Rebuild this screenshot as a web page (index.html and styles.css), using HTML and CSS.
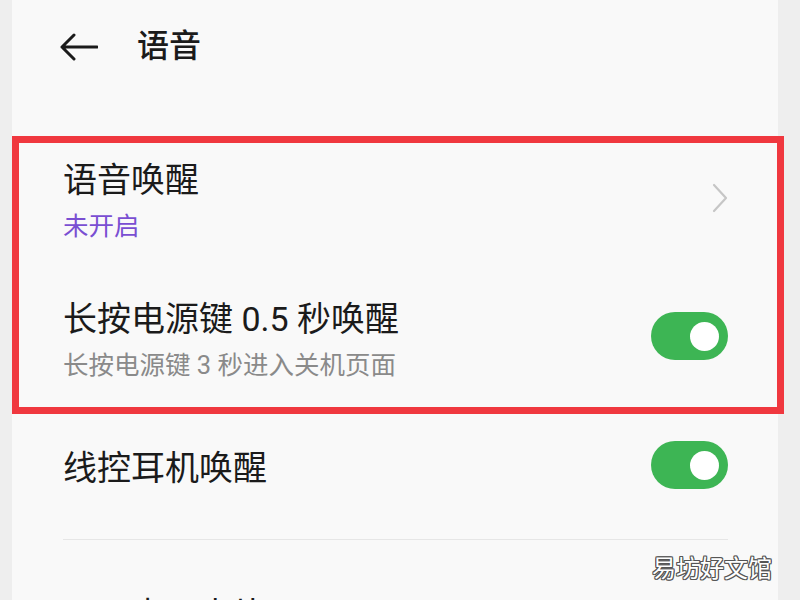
FILE: index.html
```html
<!DOCTYPE html>
<html lang="zh-CN">
<head>
  <meta charset="UTF-8" />
  <meta name="viewport" content="width=device-width, initial-scale=1.0"/>
  <title>语音</title>
  <link rel="stylesheet" href="styles.css">
</head>
<body>

  <div id="page">
    <!-- Header -->
    <div id="header">
      <button class="back" aria-label="返回">
        <svg width="38" height="30" viewBox="0 0 38 30">
          <path d="M14 3 L2 15 L14 27 M2 15 H37" fill="none" stroke="#1b1b1b" stroke-width="3" stroke-linecap="round" stroke-linejoin="round"/>
        </svg>
      </button>
      <h1>语音</h1>
    </div>

    <!-- Highlighted group -->
    <div class="highlight">
      <div class="row">
        <div class="text">
          <div class="label">语音唤醒</div>
          <div class="sub purple">未开启</div>
        </div>
        <svg class="chevron" width="16" height="30" viewBox="0 0 16 30">
          <path d="M2 2 L14 15 L2 28" fill="none" stroke="#c6c6c6" stroke-width="2.2" stroke-linecap="round" stroke-linejoin="round"/>
        </svg>
      </div>
      <div class="row">
        <div class="text">
          <div class="label">长按电源键 0.5 秒唤醒</div>
          <div class="sub">长按电源键 3 秒进入关机页面</div>
        </div>
        <div class="toggle on"><span class="knob"></span></div>
      </div>
    </div>

    <!-- Other settings -->
    <div class="item">
      <div class="label">线控耳机唤醒</div>
      <div class="toggle on"><span class="knob"></span></div>
    </div>
    <div class="item last">
      <div class="label">显示桌面卡片</div>
    </div>
  </div>

  <div class="watermark">易坊好文馆</div>

</body>
</html>
```

FILE: styles.css
```css
/* -- Reset & Base -- */
* { box-sizing: border-box; margin: 0; padding: 0; }
body {
  font-family: Roboto, "Noto Sans CJK SC", sans-serif;
  background: #eeeeee;
  color: #1b1b1b;
  height: 600px;
  overflow: hidden;
}
button { cursor: pointer; background: none; border: none; }

/* -- Page panel -- */
#page {
  margin-left: 12px;
  width: 766px;
  min-height: 600px;
  background: #f9f9f9;
}

/* -- Header -- */
#header {
  height: 94px;
  display: flex;
  align-items: center;
  padding-left: 48px;
  margin-bottom: 42px;
}
#header .back {
  display: flex;
  margin-right: 39px;
}
#header h1 {
  font-size: 32px;
  font-weight: 500;
  line-height: 46px;
  margin-bottom: 2px;
}

/* -- Red highlight box -- */
.highlight {
  border: 7px solid #f0383f;
  margin-right: -6px;
  padding: 14px 0 19px;
}
.row {
  display: flex;
  align-items: center;
  justify-content: space-between;
  padding: 0 49px 0 44px;
}
.row + .row { margin-top: 47px; }

.label {
  font-size: 34px;
  line-height: 46px;
}
.sub {
  font-size: 25.5px;
  line-height: 46px;
  color: #8a8a8a;
}
.sub.purple { color: #7a4fd2; }

.chevron { margin-bottom: 10px; }

/* -- Toggle -- */
.toggle {
  width: 77px;
  height: 48px;
  border-radius: 24px;
  background: #ccc;
  position: relative;
  flex-shrink: 0;
}
.toggle.on { background: #3db554; }
.row .toggle { margin-bottom: 12px; }
.knob {
  position: absolute;
  top: 9.5px;
  right: 9px;
  width: 29px;
  height: 29px;
  border-radius: 50%;
  background: #fff;
}

/* -- Plain items -- */
.item {
  display: flex;
  align-items: center;
  justify-content: space-between;
  margin: 0 50px 0 51px;
  padding: 27px 0 44px;
  border-bottom: 1px solid #e6e6e6;
}
.item .toggle { margin-bottom: 6px; }
.item.last {
  border-bottom: none;
  padding-top: 52px;
}

/* -- Watermark overlay -- */
.watermark {
  position: absolute;
  left: 652px;
  top: 548px;
  font-size: 24px;
  line-height: 38px;
  color: #fff;
  font-family: "Noto Sans CJK SC", sans-serif;
  text-shadow:
    1px 0 0 #555, -1px 0 0 #555, 0 1px 0 #555, 0 -1px 0 #555,
    1px 1px 0 #555, -1px -1px 0 #555, 1px -1px 0 #555, -1px 1px 0 #555;
}
```
